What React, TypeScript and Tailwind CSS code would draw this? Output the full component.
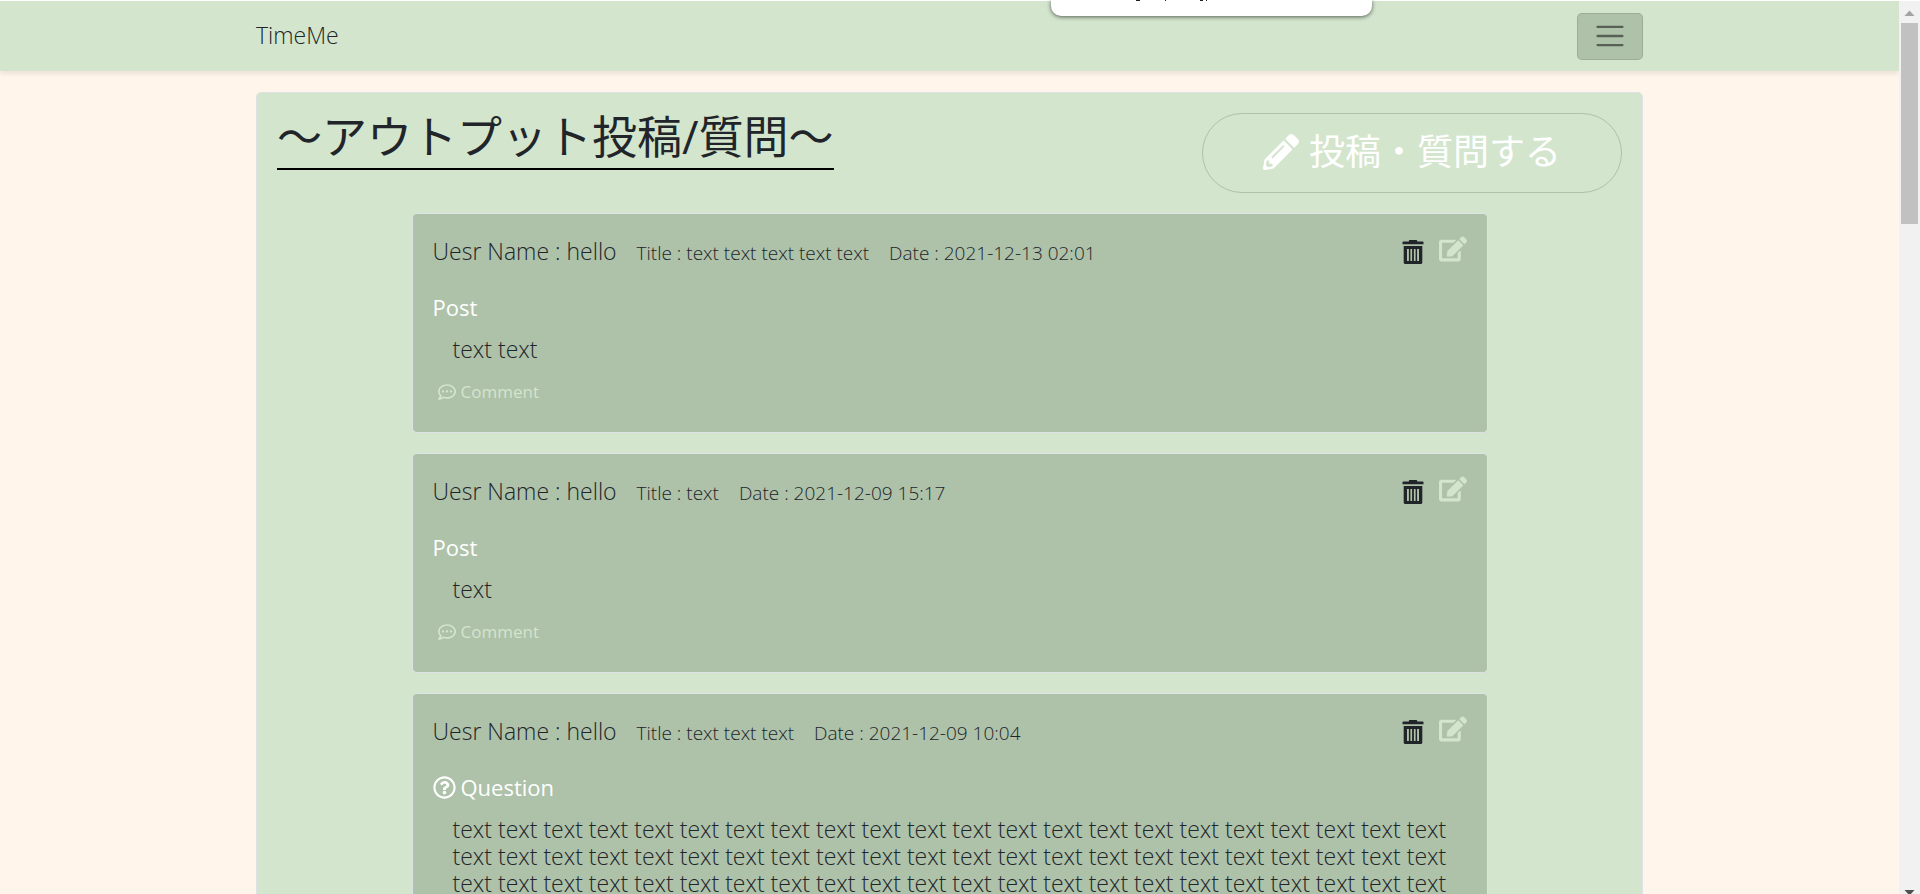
import { FaEdit, FaPencilAlt, FaRegCommentDots, FaRegQuestionCircle } from "react-icons/fa";

type Entry = {
  kind: "Post" | "Question";
  title: string;
  date: string;
  body: string;
};

const entries: Entry[] = [
  { kind: "Post", title: "text text text text text", date: "2021-12-13 02:01", body: "text text" },
  { kind: "Post", title: "text", date: "2021-12-09 15:17", body: "text" },
  { kind: "Question", title: "text text text", date: "2021-12-09 10:04", body: Array(88).fill("text").join(" ") },
];

function TrashIcon() {
  return (
    <svg viewBox="0 0 22 24" className="h-6 w-[22px]" fill="currentColor" aria-hidden="true">
      <path d="M7.5 0h7a.6.6 0 0 1 .6.6v1h5.6a.8.8 0 0 1 .8.8v1.8H.5V2.4a.8.8 0 0 1 .8-.8h5.6v-1a.6.6 0 0 1 .6-.6z" />
      <path
        fillRule="evenodd"
        d="M1.7 6h18.6v16.4a1.6 1.6 0 0 1-1.6 1.6H3.3a1.6 1.6 0 0 1-1.6-1.6zM5 9v12h1.9V9zm3.4 0v12h1.7V9zm3.5 0v12h1.7V9zm3.2 0v12H17V9z"
      />
    </svg>
  );
}

function Navbar() {
  return (
    <nav className="relative flex h-[70px] shrink-0 justify-center bg-[#d3e5cd] shadow-[0_3px_5px_rgba(0,0,0,0.08)]">
      <div className="flex w-full max-w-[1387px] items-center justify-between">
        <a href="#home" className="pb-0.5 text-[23px] leading-[34px]">
          TimeMe
        </a>
        <button
          type="button"
          aria-label="Toggle navigation"
          className="flex h-[47px] w-[66px] items-center justify-center rounded-[5px] border border-black/10 bg-[#aec1a9]"
        >
          <svg viewBox="0 0 30 30" className="size-[34px]" stroke="rgba(0,0,0,0.5)" strokeWidth="2" strokeLinecap="round">
            <path d="M4 7h22M4 15h22M4 23h22" />
          </svg>
        </button>
      </div>
    </nav>
  );
}

function Popup() {
  return (
    <div className="absolute top-0 left-[1051px] z-10 h-4 w-[321px] rounded-b-[10px] bg-white shadow-[0_1px_4px_rgba(0,0,0,0.6)]">
      <svg viewBox="0 0 321 1" className="h-px w-full" fill="#222" aria-hidden="true">
        <path d="M85 0h4v1h-4zM114 0h1v1h-1zM149 0h3v1h-3zM155 0h1v1h-1z" />
      </svg>
    </div>
  );
}

function Card({ entry }: { entry: Entry }) {
  return (
    <article className="rounded-[5px] border border-[#dee2e6] bg-[#aec1a9] px-5 pt-5 pb-[26px]">
      <header className="flex h-[34px] items-center">
        <h2 className="text-[23px] leading-[27px]">Uesr Name : hello</h2>
        <p className="ml-5 pt-[5px] text-[19px] leading-[27px]">Title : {entry.title}</p>
        <p className="ml-5 pt-[5px] text-[19px] leading-[27px]">Date : {entry.date}</p>
        <button type="button" aria-label="Delete" className="ml-auto pt-0.5">
          <TrashIcon />
        </button>
        <a href="#edit" aria-label="Edit" className="ml-[15px] pb-1 text-[#d3e5cd]">
          <FaEdit className="size-7" />
        </a>
      </header>
      <h3 className="mt-[26px] flex items-center gap-[5px] text-[22px] leading-[27px] font-normal text-white">
        {entry.kind === "Question" && <FaRegQuestionCircle className="size-[23px]" />}
        {entry.kind}
      </h3>
      <p className="mt-[15px] pr-3 pl-5 text-[23px] leading-[27px]">{entry.body}</p>
      <a href="#comment" className="mt-[15px] ml-[5px] flex items-center gap-[5px] text-[17px] leading-7 font-normal text-[#d3e5cd]">
        <FaRegCommentDots className="size-[18px]" />
        Comment
      </a>
    </article>
  );
}

function Scrollbar() {
  return (
    <div className="flex w-[21px] shrink-0 flex-col items-center bg-[#f1f1f1]" aria-hidden="true">
      <svg viewBox="0 0 21 22" className="h-[22px] w-[21px]" fill="#a3a3a3">
        <path d="M10.5 9.5l5 5.500h-10z" />
      </svg>
      <div className="h-[201px] w-[17px] bg-[#c1c1c1]" />
      <svg viewBox="0 0 21 6" className="mt-auto h-[6px] w-[21px]" fill="#505050">
        <path d="M5.5 2h10l-5 5.500z" />
      </svg>
    </div>
  );
}

export default function App() {
  return (
    <div className="flex h-screen overflow-hidden border-t border-white bg-[#fff5eb] font-['Open_Sans','Noto_Sans_CJK_JP',sans-serif] font-light text-[#212529]">
      <Popup />
      <div className="flex min-w-0 grow flex-col overflow-hidden">
        <Navbar />
        <main className="flex justify-center pt-[21px]">
          <section className="w-full max-w-[1387px] rounded-[5px] border border-[#dee2e6] bg-[#d3e5cd] p-5">
            <div className="flex items-start justify-between">
              <h1 className="border-b-2 border-black pb-[7px] text-[45px] leading-[48px] font-normal whitespace-nowrap">
                〜アウトプット投稿/質問〜
              </h1>
              <button
                type="button"
                className="flex h-20 items-center gap-[10px] rounded-[40px] border border-[#aec1a9] px-[60px] pb-[3px] text-[36px] leading-[54px] font-normal whitespace-nowrap text-white"
              >
                <FaPencilAlt className="size-9" />
                投稿・質問する
              </button>
            </div>
            <div className="mx-auto mt-5 flex w-4/5 flex-col gap-5">
              {entries.map((entry) => (
                <Card key={entry.date} entry={entry} />
              ))}
            </div>
          </section>
        </main>
      </div>
      <Scrollbar />
    </div>
  );
}
